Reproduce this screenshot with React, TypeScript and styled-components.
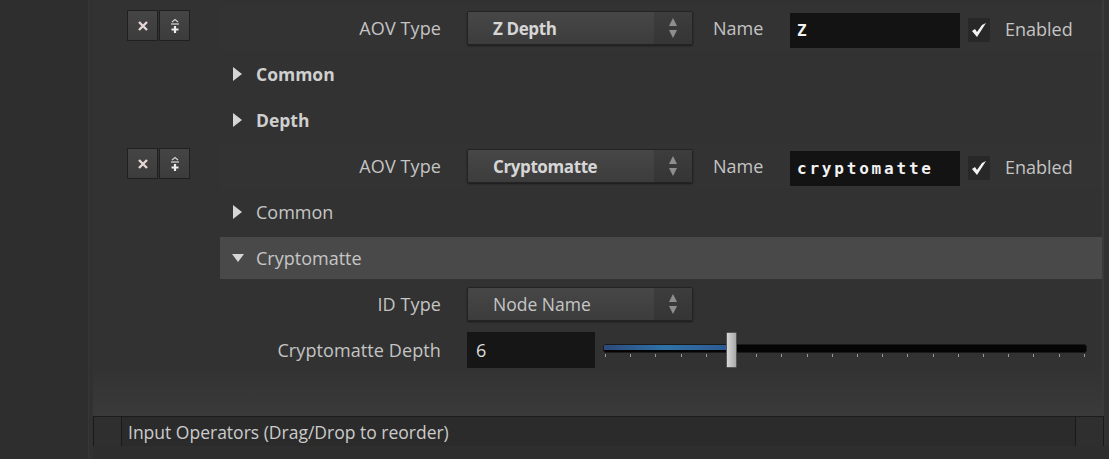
import styled, { createGlobalStyle } from "styled-components";

const Global = createGlobalStyle`
  html, body {
    margin: 0;
    padding: 0;
    background: #2d2d2d;
  }
  body {
    font-family: "Open Sans", "Liberation Sans", sans-serif;
    color: #c6c6c6;
  }
`;

const Page = styled.div`
  display: flex;
  width: 1109px;
  height: 459px;
  overflow: hidden;
  background: #2d2d2d;
`;

const SidePanel = styled.div`
  width: 88px;
  flex: none;
  background: #2e2e2e;
  border-right: 1px solid #363636;
`;

const Main = styled.div`
  flex: 1;
  display: flex;
  flex-direction: column;
  padding-left: 4px;
  background: #313131;
`;

const Parms = styled.div`
  height: 416px;
  flex: none;
  padding-top: 5px;
  box-sizing: border-box;
  margin-right: 5px;
  background: linear-gradient(#323232 0, #323232 88%, #3a3a3a 100%);
  border-right: 2px solid #3a3a3a;
`;

const Row = styled.div`
  display: flex;
  height: 46px;
`;

const Gutter = styled.div`
  width: 127px;
  flex: none;
  display: flex;
  align-items: flex-start;
  padding: 5px 0 0 34px;
  box-sizing: border-box;
`;

const Body = styled.div<{ $shade?: boolean }>`
  flex: 1;
  display: flex;
  align-items: center;
  background: ${(p) => (p.$shade ? "#333333" : "transparent")};
`;

const MiniButton = styled.div`
  width: 31px;
  height: 31px;
  display: flex;
  align-items: center;
  justify-content: center;
  background: linear-gradient(#454545, #3c3c3c);
  border: 1px solid #202020;
  box-sizing: border-box;
  & + & {
    margin-left: 1px;
  }
`;

const Label = styled.div`
  width: 221px;
  flex: none;
  text-align: right;
  font-size: 18px;
  letter-spacing: 0.1px;
  color: #c4c4c4;
  margin-right: 26px;
  white-space: nowrap;
`;

const Menu = styled.div<{ $bold?: boolean }>`
  width: 226px;
  height: 34px;
  flex: none;
  display: flex;
  align-items: center;
  box-sizing: border-box;
  border: 1px solid #242424;
  border-radius: 2px;
  background: linear-gradient(#474747, #3c3c3c);
  box-shadow: 0 1px 2px rgba(0, 0, 0, 0.5);
  font-size: ${(p) => (p.$bold ? "17px" : "17.5px")};
  font-weight: ${(p) => (p.$bold ? 700 : 400)};
  letter-spacing: ${(p) => (p.$bold ? "-0.4px" : "0")};
  color: ${(p) => (p.$bold ? "#d6d6d6" : "#c6c6c6")};
`;

const MenuText = styled.span`
  flex: 1;
  padding-left: 25px;
`;

const MenuArrows = styled.div`
  width: 38px;
  height: 100%;
  display: flex;
  align-items: center;
  justify-content: center;
  background: linear-gradient(#3d3d3d, #353535);
`;

const NameLabel = styled.div`
  width: 97px;
  flex: none;
  padding-left: 20px;
  box-sizing: border-box;
  font-size: 18px;
  color: #c4c4c4;
`;

const NameField = styled.div`
  width: 170px;
  height: 35px;
  flex: none;
  display: flex;
  align-items: center;
  margin-top: 4px;
  padding-left: 7px;
  box-sizing: border-box;
  background: #131313;
  font-family: "DejaVu Sans Mono", "Liberation Mono", monospace;
  font-weight: 700;
  font-size: 16px;
  letter-spacing: 2.8px;
  color: #f2f2f2;
`;

const Check = styled.div`
  width: 22px;
  height: 24px;
  margin: 4px 15px 0 8px;
  display: flex;
  align-items: center;
  justify-content: center;
  background: #282828;
`;

const Toggle = styled.div`
  font-size: 18px;
  color: #c4c4c4;
  margin-top: 2px;
`;

const Folder = styled.div<{ $open?: boolean; $bold?: boolean }>`
  flex: 1;
  height: 42px;
  display: flex;
  align-items: center;
  padding-left: 12px;
  gap: 12px;
  background: ${(p) => (p.$open ? "#494949" : "transparent")};
  font-size: ${(p) => (p.$bold ? "17.5px" : "18px")};
  font-weight: ${(p) => (p.$bold ? 700 : 400)};
  color: ${(p) => (p.$bold ? "#cfcfcf" : "#c6c6c6")};
`;

const ValueField = styled.div`
  width: 128px;
  height: 36px;
  flex: none;
  display: flex;
  align-items: center;
  padding-left: 9px;
  box-sizing: border-box;
  background: #161616;
  font-size: 18px;
  color: #dcdcdc;
`;

const Slider = styled.div`
  position: relative;
  width: 484px;
  height: 36px;
  margin-left: 8px;
  flex: none;
`;

const Track = styled.div`
  position: absolute;
  left: 0;
  right: 0;
  top: 12px;
  height: 7px;
  background: #050505;
  border: 1px solid #1a1a1a;
  border-radius: 3px;
`;

const Fill = styled.div`
  position: absolute;
  left: 1px;
  top: 13px;
  height: 5px;
  background: linear-gradient(90deg, #2d4a7a, #2f72a8 50%, #2d5a92);
`;

const Ticks = styled.div`
  position: absolute;
  left: 2px;
  right: 0;
  top: 22px;
  height: 3px;
  background: repeating-linear-gradient(
    90deg,
    #9a9a9a 0,
    #9a9a9a 1px,
    transparent 1px,
    transparent 25.2px
  );
`;

const Handle = styled.div`
  position: absolute;
  top: 0;
  width: 11px;
  height: 36px;
  border-radius: 1px;
  background: linear-gradient(90deg, #d8d8d8, #a8a8a8);
  border: 1px solid #555;
  box-sizing: border-box;
`;

const Bar = styled.div`
  height: 30px;
  flex: none;
  display: flex;
  margin-right: 5px;
  border-top: 1px solid #1c1c1c;
  box-sizing: border-box;
  background: #2b2b2b;
`;

const BarBox = styled.div`
  width: 27px;
  flex: none;
  border-left: 1px solid #1a1a1a;
  border-right: 1px solid #1a1a1a;
  background: #2f2f2f;
`;

const BarText = styled.div`
  flex: 1;
  display: flex;
  align-items: center;
  padding-left: 6px;
  font-size: 17.5px;
  color: #cbcbcb;
`;

const Footer = styled.div`
  flex: 1;
  background: #2e2e2e;
`;

function Cross() {
  return (
    <svg width="12" height="12" viewBox="0 0 12 12">
      <path d="M2 2 L10 10 M10 2 L2 10" stroke="#e8d6d6" strokeWidth="2.4" />
    </svg>
  );
}

function Insert() {
  return (
    <svg width="12" height="16" viewBox="0 0 12 16">
      <path d="M3 4 L6 1.5 L9 4" stroke="#cfcfcf" strokeWidth="1.3" fill="none" />
      <path d="M2 6 H10" stroke="#cfcfcf" strokeWidth="1.3" />
      <path d="M6 8 V15 M2.5 11.5 H9.5" stroke="#ececec" strokeWidth="2.2" />
    </svg>
  );
}

function Arrows() {
  return (
    <svg width="10" height="22" viewBox="0 0 10 22">
      <path d="M5 1 L9 9 H1 Z" fill="#8e8e8e" />
      <path d="M5 21 L9 13 H1 Z" fill="#8e8e8e" />
    </svg>
  );
}

function Tick() {
  return (
    <svg width="18" height="18" viewBox="0 0 18 18">
      <path d="M2 10 L7 16 L16 2 L12 4 L7 11 L5 8 Z" fill="#f4f4f4" />
    </svg>
  );
}

function Twirl({ open }: { open?: boolean }) {
  return open ? (
    <svg width="12" height="12" viewBox="0 0 12 12">
      <path d="M0 2 H12 L6 10 Z" fill="#d6d6d6" />
    </svg>
  ) : (
    <svg width="12" height="14" viewBox="0 0 12 14">
      <path d="M1 0 L10 7 L1 14 Z" fill="#d6d6d6" />
    </svg>
  );
}

function AovRow({ type, name }: { type: string; name: string }) {
  return (
    <Row>
      <Gutter>
        <MiniButton>
          <Cross />
        </MiniButton>
        <MiniButton>
          <Insert />
        </MiniButton>
      </Gutter>
      <Body $shade>
        <Label>AOV Type</Label>
        <Menu $bold>
          <MenuText>{type}</MenuText>
          <MenuArrows>
            <Arrows />
          </MenuArrows>
        </Menu>
        <NameLabel>Name</NameLabel>
        <NameField>{name}</NameField>
        <Check>
          <Tick />
        </Check>
        <Toggle>Enabled</Toggle>
      </Body>
    </Row>
  );
}

function FolderRow({
  title,
  open,
  bold,
}: {
  title: string;
  open?: boolean;
  bold?: boolean;
}) {
  return (
    <Row>
      <Gutter />
      <Body>
        <Folder $open={open} $bold={bold}>
          <Twirl open={open} />
          {title}
        </Folder>
      </Body>
    </Row>
  );
}

export default function App() {
  const depth = 6;
  const handleLeft = 123;
  return (
    <>
      <Global />
      <Page>
        <SidePanel />
        <Main>
          <Parms>
            <AovRow type="Z Depth" name="Z" />
            <FolderRow title="Common" bold />
            <FolderRow title="Depth" bold />
            <AovRow type="Cryptomatte" name="cryptomatte" />
            <FolderRow title="Common" />
            <FolderRow title="Cryptomatte" open />
            <Row>
              <Gutter />
              <Body>
                <Label>ID Type</Label>
                <Menu>
                  <MenuText>Node Name</MenuText>
                  <MenuArrows>
                    <Arrows />
                  </MenuArrows>
                </Menu>
              </Body>
            </Row>
            <Row>
              <Gutter />
              <Body>
                <Label>Cryptomatte Depth</Label>
                <ValueField>{depth}</ValueField>
                <Slider>
                  <Track />
                  <Fill style={{ width: handleLeft }} />
                  <Ticks />
                  <Handle style={{ left: handleLeft }} />
                </Slider>
              </Body>
            </Row>
          </Parms>
          <Bar>
            <BarBox />
            <BarText>Input Operators (Drag/Drop to reorder)</BarText>
            <BarBox />
          </Bar>
          <Footer />
        </Main>
      </Page>
    </>
  );
}
